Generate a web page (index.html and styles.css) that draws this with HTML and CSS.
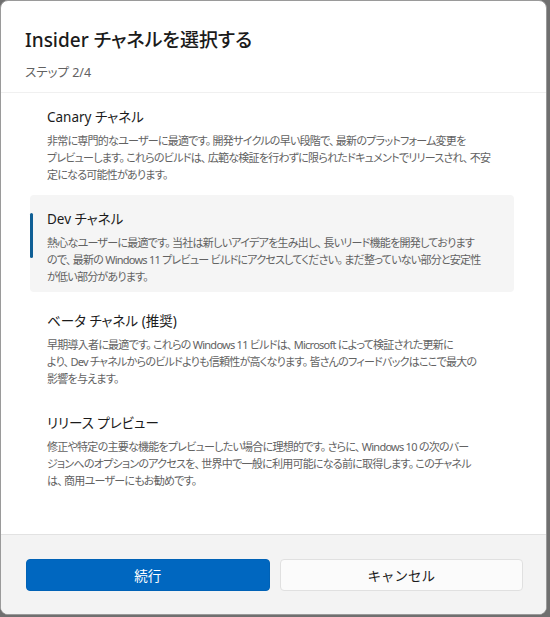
FILE: index.html
```html
<!DOCTYPE html>
<html lang="ja">
<head>
    <meta charset="UTF-8">
    <meta name="viewport" content="width=device-width, initial-scale=1.0">
    <title>Insider チャネルを選択する</title>
    <link rel="stylesheet" href="styles.css">
</head>
<body>
    <div class="Dialog">
        <div class="Head">
            <h1 class="Title">Insider チャネルを選択する</h1>
            <p class="Step">ステップ 2/4</p>
        </div>

        <div class="List">
            <div class="Option">
                <p class="Name">Canary チャネル</p>
                <p class="Desc">非常に専門的なユーザーに最適です。 開発サイクルの早い段階で、 最新のプラットフォーム変更を<br>プレビューします。 これらのビルドは、 広範な検証を行わずに限られたドキュメントでリリースされ、 不安<br>定になる可能性があります。</p>
            </div>
            <div class="Option selected">
                <p class="Name">Dev チャネル</p>
                <p class="Desc">熱心なユーザーに最適です。 当社は新しいアイデアを生み出し、 長いリード機能を開発しております<br>ので、 最新の Windows 11 プレビュー ビルドにアクセスしてください。 まだ整っていない部分と安定性<br>が低い部分があります。</p>
            </div>
            <div class="Option">
                <p class="Name">ベータ チャネル (推奨)</p>
                <p class="Desc">早期導入者に最適です。 これらの Windows 11 ビルドは、 Microsoft によって検証された更新に<br>より、 Dev チャネルからのビルドよりも信頼性が高くなります。 皆さんのフィードバックはここで最大の<br>影響を与えます。</p>
            </div>
            <div class="Option">
                <p class="Name">リリース プレビュー</p>
                <p class="Desc">修正や特定の主要な機能をプレビューしたい場合に理想的です。 さらに、 Windows 10 の次のバー<br>ジョンへのオプションのアクセスを、 世界中で一般に利用可能になる前に取得します。 このチャネル<br>は、 商用ユーザーにもお勧めです。</p>
            </div>
        </div>

        <div class="Foot">
            <button class="Btn primary">続行</button>
            <button class="Btn">キャンセル</button>
        </div>
    </div>
</body>
</html>
```

FILE: styles.css
```css
*{
    box-sizing: border-box;
    margin: 0;
    padding: 0;
}
body{
    background-color: #6f6f6f;
    font-family: "Noto Sans", "Noto Sans CJK JP", sans-serif;
    font-feature-settings: "palt";
    overflow: hidden;
}
.Dialog{
    width: 547px;
    height: 615px;
    background-color: white;
    border: 1px solid #9a9a9a;
    border-radius: 8px;
    overflow: hidden;
    display: flex;
    flex-direction: column;
}
.Head{
    padding: 25px 24px 10px;
}
.Title{
    font-size: 19px;
    font-weight: 500;
    line-height: 28px;
    color: #1b1b1b;
}
.Step{
    margin-top: 10px;
    font-size: 12.5px;
    line-height: 18px;
    color: #616161;
}
.List{
    flex: 1;
    padding: 0 32px 0 29px;
    border-top: 1px solid #f0f0f0;
    display: flex;
    flex-direction: column;
    gap: 5px;
}
.Option{
    position: relative;
    height: 97px;
    padding: 14px 17px 0;
    border-radius: 4px;
}
.selected{
    background-color: #f5f5f5;
}
.selected::before{
    content: "";
    position: absolute;
    left: 0;
    top: 18px;
    width: 3px;
    height: 45px;
    border-radius: 2px;
    background-color: #0f5f95;
}
.Name{
    font-size: 13.5px;
    line-height: 20px;
    color: #1b1b1b;
}
.Desc{
    margin-top: 5px;
    font-size: 11px;
    line-height: 17px;
    letter-spacing: -0.75px;
    color: #626262;
    white-space: nowrap;
}
.Foot{
    display: flex;
    gap: 10px;
    padding: 24px 23px 23px 25px;
    background-color: #f3f3f3;
    border-top: 1px solid #e2e2e2;
}
.Btn{
    flex: 1;
    height: 32px;
    font-family: inherit;
    font-size: 13.5px;
    color: #1b1b1b;
    background-color: #fbfbfb;
    border: 1px solid #e0e0e0;
    border-radius: 4px;
}
.primary{
    background-color: #0067c0;
    border-color: #0062b6;
    color: white;
}
```
